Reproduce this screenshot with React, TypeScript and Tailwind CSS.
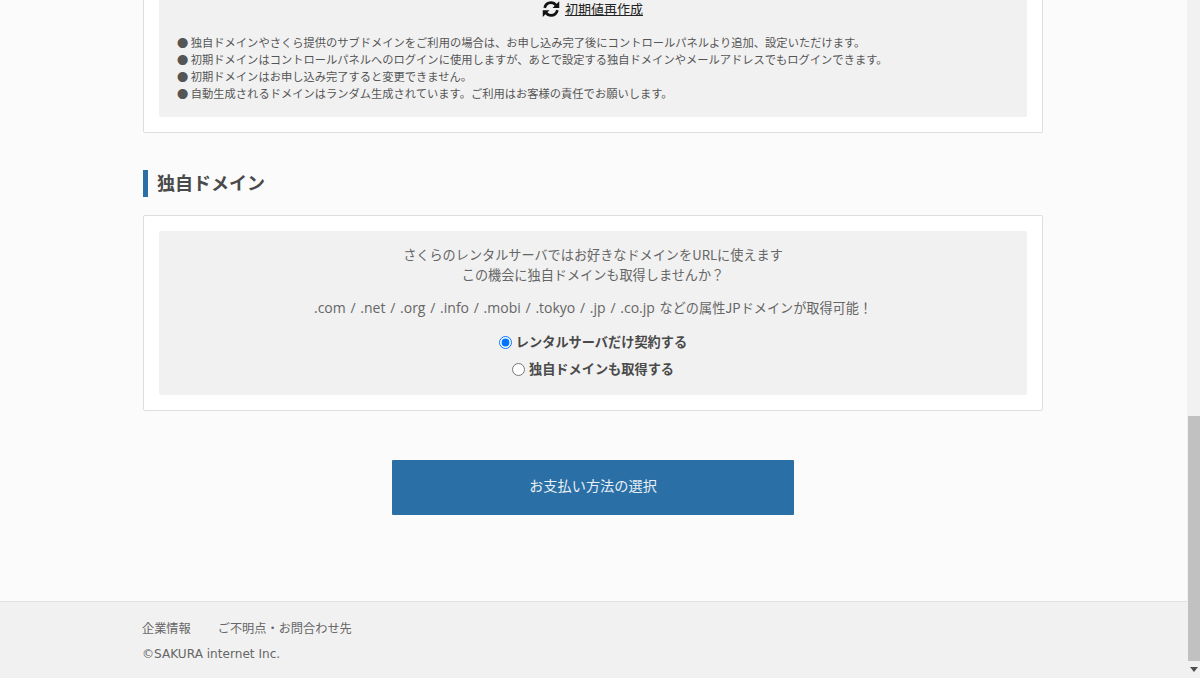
import React from "react";

const jp = "font-['Noto_Sans_CJK_JP','Noto_Sans',sans-serif]";

export default function App() {
  return (
    <div className={`flex h-[678px] w-[1200px] overflow-hidden bg-[#fbfbfb] text-[#555] ${jp}`}>
      <div className="flex h-full w-[1187px] flex-col">
        <main className="flex-1 pl-[143px]">
          <section className="h-[133px] w-[900px] rounded-b-[2px] border-x border-b border-[#dedede] bg-white px-[15px]">
            <div className="h-[117px] rounded-b-[2px] bg-[#f1f1f1] pl-[18px]">
              <div className="flex h-[17px] items-center justify-center gap-[5px] pr-[19px] text-[13px] leading-[17px]">
                <svg width="18" height="18" viewBox="0 0 24 24" fill="none" stroke="#111" strokeWidth="3.6">
                  <path d="M3.5 10.5C4.6 6.2 8 3.4 12 3.4c2.8 0 5 1.2 6.6 3.6" />
                  <path d="M23 1.5V10.5h-9z" fill="#111" stroke="none" />
                  <path d="M20.5 13.5c-1.100 4.300-4.500 7.100-8.500 7.100-2.800 0-5-1.200-6.600-3.600" />
                  <path d="M1 22.500V13.500h9z" fill="#111" stroke="none" />
                </svg>
                <a className="text-[#222] underline">初期値再作成</a>
              </div>
              <ul className="mt-[17px] text-[11.27px] leading-[17px] text-[#555]">
                <li>● 独自ドメインやさくら提供のサブドメインをご利用の場合は、お申し込み完了後にコントロールパネルより追加、設定いただけます。</li>
                <li>● 初期ドメインはコントロールパネルへのログインに使用しますが、あとで設定する独自ドメインやメールアドレスでもログインできます。</li>
                <li>● 初期ドメインはお申し込み完了すると変更できません。</li>
                <li>● 自動生成されるドメインはランダム生成されています。ご利用はお客様の責任でお願いします。</li>
              </ul>
            </div>
          </section>

          <h2 className="mt-[37px] h-[27px] border-l-[5px] border-[#2a70a6] pl-[9px] text-[18px] font-bold leading-[25px] text-[#4a4a4a]">
            独自ドメイン
          </h2>

          <section className="mt-[18px] h-[196px] w-[900px] rounded-[2px] border border-[#dedede] bg-white p-[15px]">
            <div className="h-[164px] rounded-[2px] bg-[#f1f1f1] pt-[14px] text-center text-[13.15px] leading-[20px] text-[#666]">
              <p>さくらのレンタルサーバではお好きなドメインをURLに使えます</p>
              <p>この機会に独自ドメインも取得しませんか？</p>
              <p className="mt-[13px]">
                <span className="font-['Open_Sans',sans-serif] text-[14px] [word-spacing:1.1px]">.com / .net / .org / .info / .mobi / .tokyo / .jp / .co.jp </span>
                などの属性JPドメインが取得可能！
              </p>
              <label className="mt-[14px] flex h-[20px] items-center justify-center gap-[4px] text-[13.2px] font-bold text-[#4a4a4a]">
                <input type="radio" name="d" defaultChecked className="h-[13px] w-[13px] accent-[#0075ff]" />
                レンタルサーバだけ契約する
              </label>
              <label className="mt-[7px] flex h-[20px] items-center justify-center gap-[4px] text-[13.2px] font-bold text-[#4a4a4a]">
                <input type="radio" name="d" className="h-[13px] w-[13px]" />
                独自ドメインも取得する
              </label>
            </div>
          </section>

          <div className="mt-[49px] w-[900px]">
            <button className="mx-auto block h-[55px] w-[402px] rounded-[1px] bg-[#2a70a6] pb-[3px] text-[14.2px] text-[#e8eff5]">
              お支払い方法の選択
            </button>
          </div>
        </main>

        <footer className="h-[77px] border-t border-[#e0e0e0] bg-[#f1f1f1] pl-[142px] pt-[16px] text-[12.2px] leading-[20px] text-[#666]">
          <div className="flex gap-[27px]">
            <a>企業情報</a>
            <a>ご不明点・お問合わせ先</a>
          </div>
          <p className="mt-[6px] font-['DejaVu_Sans','Noto_Sans_CJK_JP',sans-serif] text-[12.1px]">©SAKURA internet Inc.</p>
        </footer>
      </div>

      <div className="flex h-full w-[13px] flex-col bg-[#f1f1f1]">
        <div className="h-[416px]" />
        <div className="ml-[1px] h-[245px] bg-[#c1c1c1]" />
        <div className="flex flex-1 items-center justify-center">
          <svg width="8" height="5" viewBox="0 0 8 5"><path d="M0 0h8L4 5z" fill="#505050" /></svg>
        </div>
      </div>
    </div>
  );
}
